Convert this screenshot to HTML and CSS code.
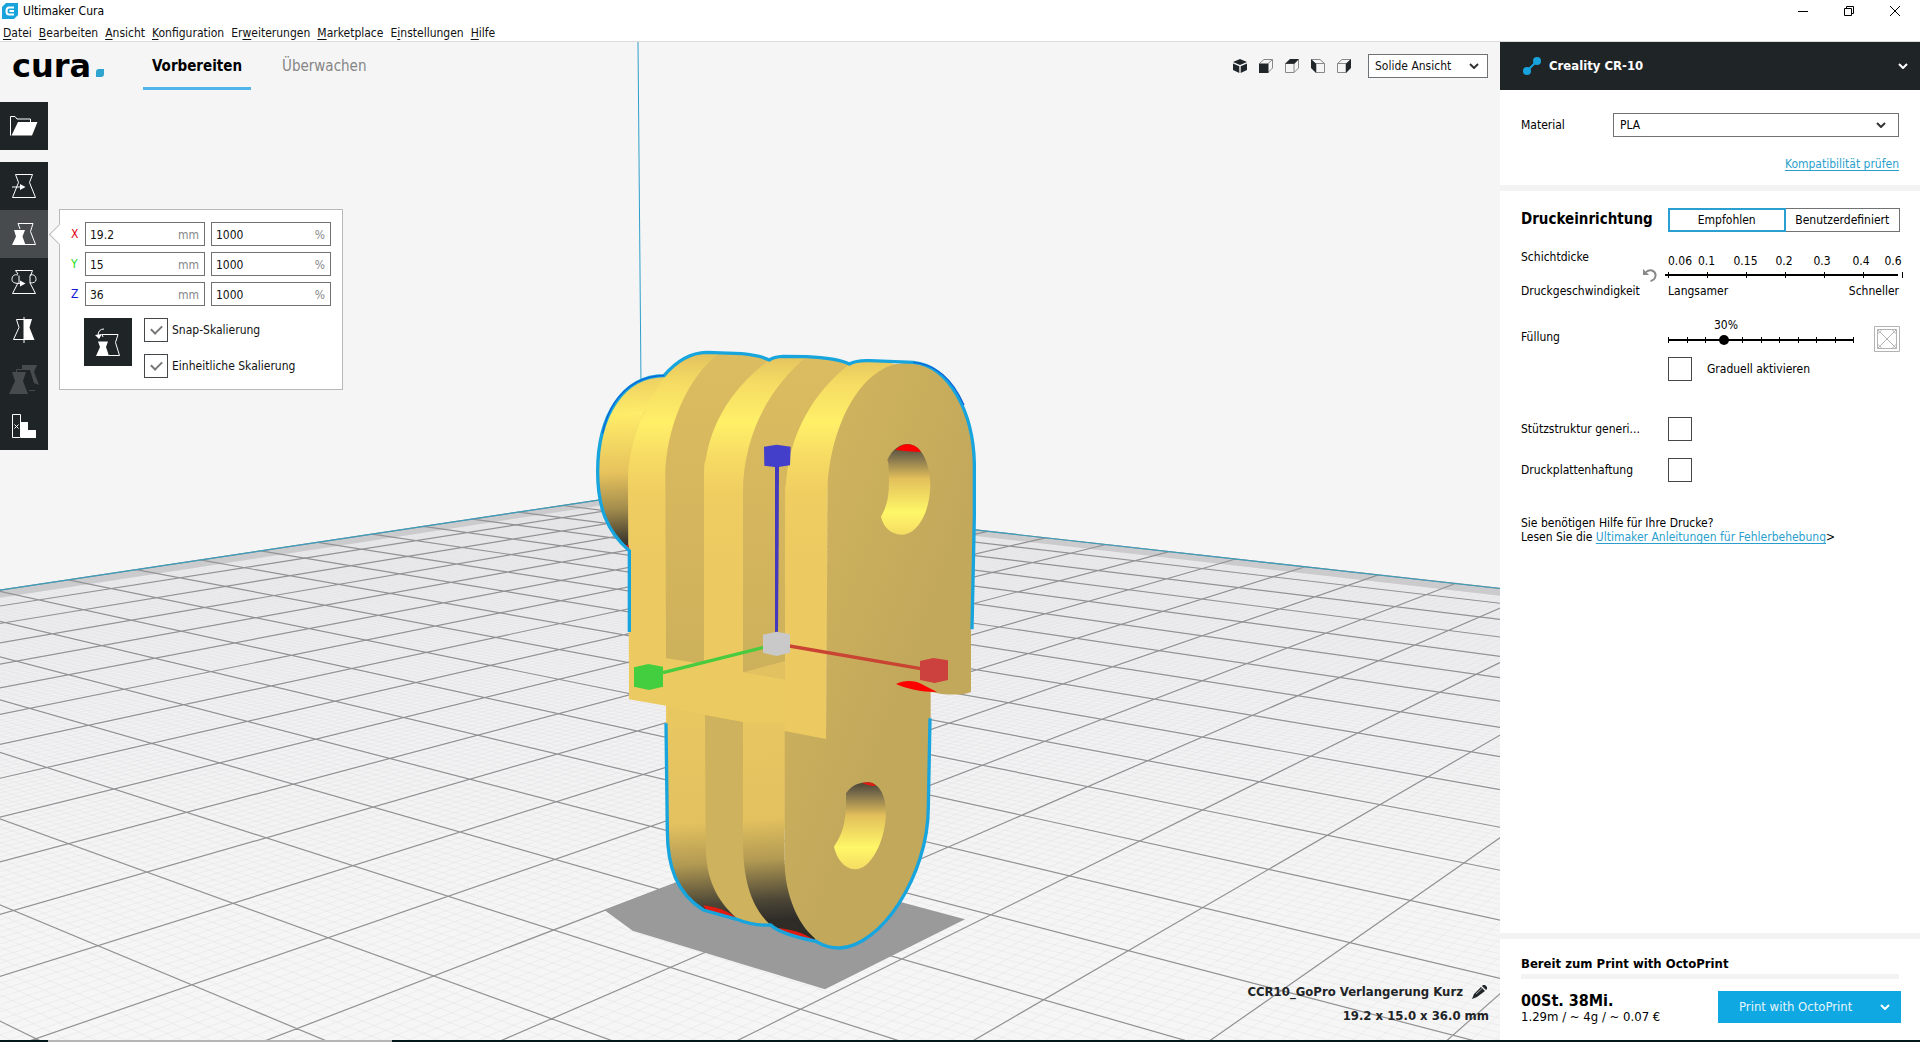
FILE: index.html
```
<!DOCTYPE html>
<html lang="de">
<head>
<meta charset="utf-8">
<title>Ultimaker Cura</title>
<link rel="stylesheet" href="styles.css">
</head>
<body>
<header class="window-bar">
  <svg class="app-icon" width="16" height="16" viewBox="0 0 16 16" aria-hidden="true"><path d="M4 0H16V12L12 16H0V4Z" fill="#18a3dc"/><path d="M12 4.500H7Q4.500 4.500 4.500 8T7 11.500H12M7.500 8H12" fill="none" stroke="#fff" stroke-width="2"/></svg>
  <span class="window-title">Ultimaker Cura</span>
  <div class="window-buttons">
    <button aria-label="Minimieren"><svg width="12" height="12" viewBox="0 0 12 12"><path d="M1 6.500H11" stroke="#000"/></svg></button>
    <button aria-label="Verkleinern"><svg width="12" height="12" viewBox="0 0 12 12"><path d="M1.500 3.500H8.500V10.500H1.500ZM3.500 3V1.500H10.500V8.500H9" fill="none" stroke="#000"/></svg></button>
    <button aria-label="Schließen"><svg width="12" height="12" viewBox="0 0 12 12"><path d="M1 1L11 11M11 1L1 11" stroke="#000"/></svg></button>
  </div>
</header>
<nav class="menu-bar">
  <a href="#"><u>D</u>atei</a><a href="#"><u>B</u>earbeiten</a><a href="#"><u>A</u>nsicht</a><a href="#"><u>K</u>onfiguration</a><a href="#">Er<u>w</u>eiterungen</a><a href="#"><u>M</u>arketplace</a><a href="#">E<u>i</u>nstellungen</a><a href="#"><u>H</u>ilfe</a>
</nav>
<div class="workspace">
  <main class="viewport">
    <svg class="scene" viewBox="0 42 1500 998" preserveAspectRatio="xMidYMid slice" aria-hidden="true">
      <defs>
        <linearGradient id="ground" gradientUnits="userSpaceOnUse" x1="0" y1="500" x2="0" y2="1040"><stop offset="0" stop-color="#ededef"/><stop offset=".3" stop-color="#f0f0f2"/><stop offset=".75" stop-color="#f5f5f5"/><stop offset="1" stop-color="#f6f6f6"/></linearGradient>
        <linearGradient id="rim" gradientUnits="userSpaceOnUse" x1="0" y1="70" x2="0" y2="700"><stop offset="0" stop-color="#e2c15e"/><stop offset=".14" stop-color="#f5db63"/><stop offset=".33" stop-color="#fff068"/><stop offset=".5" stop-color="#f6da63"/><stop offset=".68" stop-color="#efcd61"/><stop offset="1" stop-color="#ecca61"/></linearGradient>
        <linearGradient id="nut" gradientUnits="userSpaceOnUse" x1="0" y1="130" x2="30" y2="660"><stop offset="0" stop-color="#e8c860"/><stop offset=".25" stop-color="#ffec68"/><stop offset=".58" stop-color="#e6c25d"/><stop offset=".78" stop-color="#a48d4d"/><stop offset="1" stop-color="#2f2c28"/></linearGradient>
        <linearGradient id="foot" gradientUnits="userSpaceOnUse" x1="0" y1="1200" x2="40" y2="1810"><stop offset="0" stop-color="#e8c660"/><stop offset=".5" stop-color="#e3c15f"/><stop offset=".7" stop-color="#b29a53"/><stop offset=".9" stop-color="#4c4636"/><stop offset="1" stop-color="#2f2c28"/></linearGradient>
        <linearGradient id="side" gradientUnits="userSpaceOnUse" x1="700" y1="300" x2="1240" y2="500"><stop offset="0" stop-color="#d2b55e"/><stop offset="1" stop-color="#c2a85b"/></linearGradient>
        <linearGradient id="inner" gradientUnits="userSpaceOnUse" x1="0" y1="100" x2="0" y2="1050"><stop offset="0" stop-color="#dcbc60"/><stop offset="1" stop-color="#cdb05b"/></linearGradient>
        <linearGradient id="hole" x1="0" y1="0" x2="0" y2="1"><stop offset="0" stop-color="#4a4436"/><stop offset=".12" stop-color="#75694a"/><stop offset=".38" stop-color="#e2bf5b"/><stop offset=".75" stop-color="#fff768"/><stop offset="1" stop-color="#f5dc63"/></linearGradient>
      </defs>
      <g id="plate"></g>
      <path d="M638 42L641 385" stroke="#2f9fc9" fill="none"/>
      <g transform="translate(560 330) scale(.33333)">
        <path d="M133 1740L400 1640L700 1630L1215 1768L795 1978L218 1802Z" fill="#9a9a9a"/>
        <path d="M207 660V1108L318 1127V1500L674 1500L798 1227L803 470L1008 102L868 102Q800 82 740 80Q660 76 628 90Q600 74 545 70L440 66Q370 70 312 136L204 300Z" fill="#ecca62"/>
        <path d="M312 136C180 140 112 260 112 430C112 540 150 620 206 662L206 450L250 250L330 136Z" fill="url(#nut)"/>
        <path d="M204 450C204 330 270 190 330 122C370 80 400 68 440 66L500 70C400 130 316 300 316 450V1040H207Z" fill="url(#rim)"/>
        <path d="M480 68C380 140 316 300 316 440L318 985L432 1002V400L628 92Q590 72 480 68Z" fill="url(#inner)"/>
        <path d="M628 90C520 170 435 290 432 450V1040H549V470C556 300 650 150 745 82Q670 76 628 90Z" fill="url(#rim)"/>
        <path d="M740 80C640 160 552 300 549 480V1025L675 1048V470L868 102Q810 82 740 80Z" fill="url(#inner)"/>
        <path d="M549 1027L675 993V1048Z" fill="#e2c161"/>
        <path d="M868 102C760 190 684 310 677 480L675 1203L798 1227L803 470C812 300 890 130 1012 96L930 92Q890 92 868 102Z" fill="url(#rim)"/>
        <path d="M322 1130V1500C322 1610 350 1690 430 1740L530 1765L560 1600L437 1155Z" fill="url(#foot)"/>
        <path d="M430 1726C470 1732 500 1740 528 1764L440 1742Z" fill="#e21b12"/>
        <path d="M435 1155L549 1176L640 1790Q570 1786 530 1765C470 1710 437 1650 437 1540Z" fill="#cfb25d"/>
        <path d="M549 1176L674 1180V1600L768 1834Q690 1815 632 1785C580 1740 549 1660 549 1540Z" fill="url(#foot)"/>
        <path d="M645 1793C690 1797 730 1806 768 1834Q700 1820 645 1793Z" fill="#e21b12"/>
        <path d="M803 470C812 300 890 130 1008 102L1060 96C1170 110 1240 250 1243 400V560L1233 900V1085C1215 1097 1150 1096 1112 1085V1165L1105 1430C1105 1620 960 1853 840 1853C740 1853 676 1720 674 1600V1203L798 1227Z" fill="url(#side)"/>
        <path d="M982 390C1000 350 1030 340 1045 343C1085 345 1110 400 1111 465C1110 550 1070 615 1025 614C990 612 970 590 963 560C985 520 990 490 985 400Z" fill="url(#hole)"/>
        <path d="M1006 360C1022 344 1035 342 1045 343C1062 344 1074 352 1083 366Q1040 364 1006 360Z" fill="#f00"/>
        <path d="M858 1390C875 1365 900 1357 925 1357C960 1360 978 1400 978 1450C975 1540 930 1620 885 1618C850 1615 830 1585 822 1550C850 1510 860 1470 858 1390Z" fill="url(#hole)"/>
        <path d="M906 1359Q935 1352 948 1367Q930 1370 906 1359Z" fill="#e21b12"/>
        <path d="M1008 1062C1030 1050 1060 1050 1080 1060L1131 1086C1080 1086 1040 1076 1008 1062Z" fill="#f00"/>
        <path d="M195 645L206 645V660Z" fill="#e21b12"/>
        <g fill="none" stroke="#18a5de" stroke-width="10">
          <path d="M208 906V662C140 605 113 530 113 425C113 255 190 138 312 137C350 92 390 68 440 67L545 71Q600 76 628 90Q640 80 670 79L740 80Q830 84 868 102Q890 90 930 92L1060 97C1170 108 1240 250 1243 400V560L1236 898"/>
          <path d="M318 1180L322 1500C322 1610 350 1690 430 1740L530 1768Q580 1788 632 1785Q660 1812 768 1834Q800 1854 840 1854C960 1850 1105 1640 1105 1430L1110 1165"/>
        </g>
        <path d="M312 137C220 138 150 200 128 310M1060 97Q1160 106 1212 225" fill="none" stroke="#0b62d8" stroke-width="4"/>
        <path d="M645 405H657L656 630L654 910H645Z" fill="#4439bd"/>
        <path d="M612 350L650 344L692 350L690 406L650 412L613 407Z" fill="#433fcb"/>
        <path d="M309 1028L612 952" stroke="#48cb3e" stroke-width="10"/>
        <path d="M222 1012L265 1002L309 1010V1070L267 1080L222 1070Z" fill="#43ce3f"/>
        <path d="M688 948L1082 1016" stroke="#c94433" stroke-width="10"/>
        <path d="M1080 993L1120 984L1164 991V1050L1124 1059L1080 1050Z" fill="#cc403d"/>
        <path d="M609 914L650 905L690 913V968L650 978L609 968Z" fill="#c9c9c9"/>
      </g>
    </svg>
    <div class="top-bar">
      <div class="logo"><span>cura</span><svg width="8" height="8" viewBox="0 0 8 8" aria-hidden="true"><path d="M3 0H8V5Q8 8 5 8H0V3Q0 0 3 0Z" fill="#2fa4cf"/></svg></div>
      <div class="tabs"><button class="tab tab-active">Vorbereiten</button><button class="tab">Überwachen</button></div>
      <div class="camera">
        <button aria-label="3D-Ansicht"><svg viewBox="0 0 14 14"><path d="M7 0L14 3L7 6L0 3ZM0 4.500L6.300 7.200V14L0 11ZM14 4.500L7.700 7.200V14L14 11Z" fill="#1f2528"/></svg></button>
        <button aria-label="Vorderansicht"><svg viewBox="0 0 14 14"><path d="M.5 4.500L5 .5H13.500V9L9 13.500M9 4.500L13.500 .5" fill="none" stroke="#888"/><path d="M0 4.500H9.500V14H0Z" fill="#1f2528"/></svg></button>
        <button aria-label="Draufsicht"><svg viewBox="0 0 14 14"><path d="M.5 4.500H9V13.500H.5ZM9 13.500L13.500 9V.5" fill="none" stroke="#888"/><path d="M0 4.800L5 0H14L9.500 4.800Z" fill="#1f2528"/></svg></button>
        <button aria-label="Ansicht von links"><svg viewBox="0 0 14 14"><path d="M5 4.500H13.500V13.500H5ZM.5 .5H9L13.500 4.500" fill="none" stroke="#888"/><path d="M0 0L5 4.500V14L0 9Z" fill="#1f2528"/></svg></button>
        <button aria-label="Ansicht von rechts"><svg viewBox="0 0 14 14"><path d="M.5 4.500H9V13.500H.5ZM.5 4.500L5 .5H13.500" fill="none" stroke="#888"/><path d="M9 4.500L14 0V9L9 14Z" fill="#1f2528"/></svg></button>
      </div>
      <div class="select view-select"><select aria-label="Ansicht"><option>Solide Ansicht</option></select><svg class="chevron" viewBox="0 0 10 6"><path d="M1 1L5 5L9 1"/></svg></div>
    </div>
    <div class="tool-area">
      <div class="tools">
        <button class="tool tool-open" aria-label="Datei öffnen"><svg viewBox="0 0 48 48"><path d="M10.500 33.500V14.500H15L17 17H30.500V20" fill="none" stroke="#fff"/><path d="M18 20H37.500L32 33.500H11.500Z" fill="#fff"/></svg></button>
        <button class="tool" aria-label="Verschieben"><svg viewBox="0 0 48 48"><path d="M15.500 12.500H32.500L29.500 20.500L35.500 35.500H12.500L18.500 20.500ZM12 25H21" fill="none" stroke="#fff"/><path d="M20 22L25.500 25L20 28Z" fill="#fff"/></svg></button>
        <button class="tool tool-active" aria-label="Skalieren"><svg viewBox="0 0 48 48"><path d="M20 19L18 13.500H33L30.500 21.500L35.500 34.500H24" fill="none" stroke="#fff"/><path d="M14 20H25L22.500 26.500L25.500 35H12L16 26.500Z" fill="#fff"/></svg></button>
        <button class="tool" aria-label="Drehen"><svg viewBox="0 0 48 48"><path d="M18 16L15.500 12.500H32.500L30.500 18M30 25L35.500 35.500H12.500L18 25M18 17C14 16 12 18 12 21.500C12 25 16 25.500 21 25.500M19 17.500V25M30 17C34 16 36 18 36 21.500Q36 25 30 25M30 17.500V25" fill="none" stroke="#fff"/><path d="M20 22.500L25.500 25.500L20 28.500Z" fill="#fff"/></svg></button>
        <button class="tool" aria-label="Spiegeln"><svg viewBox="0 0 48 48"><path d="M24 13.500H16.500L19 21.500L13.500 33.500H24M24 11V37" fill="none" stroke="#fff"/><path d="M24 13H32L29.500 21.500L34.500 34H24Z" fill="#fff"/></svg></button>
        <button class="tool" aria-label="Einstellungen pro Objekt" disabled><svg viewBox="0 0 48 48"><path d="M12 18H26L23 27L28 40H9L15 27ZM22 11H37L34 18L39 31L34 29L30 16H22Z" fill="#474b4d"/><path d="M16.500 18V15.500H30M29 36.500H35" fill="none" stroke="#474b4d"/></svg></button>
        <button class="tool" aria-label="Stützstruktur-Blocker"><svg viewBox="0 0 48 48"><path d="M12.500 12.500H20.500V35.500H12.500ZM14.500 22.500L18.500 26.500M18.500 22.500L14.500 26.500" fill="none" stroke="#fff"/><path d="M21 20H28V28H36V36H21Z" fill="#fff"/></svg></button>
      </div>
      <form class="scale-panel">
        <div class="axis-row"><label class="axis-x" for="sx">X</label><span class="field"><input id="sx" value="19.2"><span>mm</span></span><span class="field"><input aria-label="X Prozent" value="1000"><span>%</span></span></div>
        <div class="axis-row"><label class="axis-y" for="sy">Y</label><span class="field"><input id="sy" value="15"><span>mm</span></span><span class="field"><input aria-label="Y Prozent" value="1000"><span>%</span></span></div>
        <div class="axis-row"><label class="axis-z" for="sz">Z</label><span class="field"><input id="sz" value="36"><span>mm</span></span><span class="field"><input aria-label="Z Prozent" value="1000"><span>%</span></span></div>
        <div class="scale-options">
          <button type="button" class="reset-scale" aria-label="Zurücksetzen"><svg viewBox="0 0 48 48"><path d="M19 19L18 16.500H34L31.500 24.500L35.500 37.500H25M20 11Q14 11 14 18" fill="none" stroke="#fff"/><path d="M14 23.500H24L22 29L25 38H12L16 29ZM11 17L18 16L15 21Z" fill="#fff"/></svg></button>
          <div class="checks">
            <label><input type="checkbox" class="box" checked>Snap-Skalierung</label>
            <label><input type="checkbox" class="box" checked>Einheitliche Skalierung</label>
          </div>
        </div>
      </form>
    </div>
    <div class="job-info">
      <div class="job-name"><span>CCR10_GoPro Verlangerung Kurz</span><svg width="16" height="14" viewBox="0 0 16 14" aria-hidden="true"><path d="M0 14L2 9L9 2L13 6L5 12ZM10 1L11 0H13L15 2V4L14 5Z" fill="#1f2528"/><path d="M4 9L10 3.500" stroke="#fff" stroke-width=".6"/></svg></div>
      <div>19.2 x 15.0 x 36.0 mm</div>
    </div>
  </main>
  <aside class="sidebar">
    <button class="machine"><svg width="20" height="20" viewBox="0 0 20 20" aria-hidden="true"><path d="M5 15L15 5" stroke="#18a3dc" stroke-width="2"/><circle cx="5" cy="15" r="4" fill="#18a3dc"/><circle cx="15" cy="5" r="4" fill="#18a3dc"/></svg><span>Creality CR-10</span><svg class="chevron" viewBox="0 0 10 6"><path d="M1 1L5 5L9 1"/></svg></button>
    <section class="material">
      <div class="material-row"><label for="mat">Material</label><div class="select"><select id="mat"><option>PLA</option></select><svg class="chevron" viewBox="0 0 10 6"><path d="M1 1L5 5L9 1"/></svg></div></div>
      <a href="#" class="link">Kompatibilität prüfen</a>
    </section>
    <section class="setup">
      <div class="setup-head"><h2>Druckeinrichtung</h2><div class="modes"><button class="mode mode-active">Empfohlen</button><button class="mode">Benutzerdefiniert</button></div></div>
      <div class="layer-grid">
        <div class="layer-labels"><label for="layer">Schichtdicke</label><span>Druckgeschwindigkeit</span></div>
        <button class="undo" aria-label="Zurücksetzen"><svg width="14" height="14" viewBox="0 0 14 14"><path d="M3 4Q6 1.500 9 2.500Q13 4 12.500 8Q12 12 7.500 13" fill="none" stroke="#888" stroke-width="2"/><path d="M0 1V7H6Z" fill="#888"/></svg></button>
        <div class="layer-control">
          <div class="layer-values"><span>0.06</span><span>0.1</span><span>0.15</span><span>0.2</span><span>0.3</span><span>0.4</span><span>0.6</span></div>
          <div class="slider layer-slider"><svg viewBox="0 0 240 8" aria-hidden="true"><path d="M0 4H233" stroke="#000" stroke-width="2"/><path d="M3.500 1V7M42.500 1V7M81.500 1V7M120.500 1V7M159.500 1V7M198.500 1V7M237.500 1V7" stroke="#000"/></svg><input id="layer" type="range" class="no-thumb"></div>
          <div class="speed"><span>Langsamer</span><span>Schneller</span></div>
        </div>
      </div>
      <div class="infill">
        <label for="infill">Füllung</label>
        <div class="infill-control">
          <output for="infill">30%</output>
          <div class="slider infill-slider"><svg viewBox="0 0 186 8" aria-hidden="true"><path d="M0 4H186" stroke="#000" stroke-width="2"/><path d="M.5 1V7M19.500 1V7M37.500 1V7M56.500 1V7M74.500 1V7M93.500 1V7M111.500 1V7M130.500 1V7M148.500 1V7M167.500 1V7M185.500 1V7" stroke="#000"/></svg><input id="infill" type="range" min="0" max="100" value="30"></div>
        </div>
        <svg class="infill-icon" width="26" height="26" viewBox="0 0 26 26" aria-hidden="true"><path d="M.5 .5H25.500V25.500H.5ZM3.500 3.500H22.500V22.500H3.500ZM3.500 3.500L22.500 22.500M22.500 3.500L3.500 22.500M3.500 8L8 3.500M18 3.500L22.500 8M3.500 18L8 22.500M18 22.500L22.500 18" fill="none" stroke="#b3b3b3"/></svg>
      </div>
      <label class="gradual"><input type="checkbox" class="box">Graduell aktivieren</label>
      <div class="option option-support"><label for="sup">Stützstruktur generi...</label><input id="sup" type="checkbox" class="box"></div>
      <div class="option"><label for="adh">Druckplattenhaftung</label><input id="adh" type="checkbox" class="box"></div>
      <p class="help">Sie benötigen Hilfe für Ihre Drucke?<br>Lesen Sie die <a href="#" class="link">Ultimaker Anleitungen für Fehlerbehebung</a>&gt;</p>
    </section>
    <section class="print">
      <div class="status">Bereit zum Print with OctoPrint</div>
      <div class="progress"></div>
      <div class="print-row">
        <div><div class="time">00St. 38Mi.</div><div class="usage">1.29m / ~ 4g / ~ 0.07 €</div></div>
        <button class="print-button"><span>Print with OctoPrint</span><svg class="chevron" viewBox="0 0 10 6"><path d="M1 1L5 5L9 1"/></svg></button>
      </div>
    </section>
  </aside>
</div>
<footer class="taskbar"><span></span></footer>
<script src="plate.js"></script>
</body>
</html>
```
FILE: styles.css
```
* { box-sizing: border-box; }
body { margin: 0; height: 100vh; display: flex; flex-direction: column; overflow: hidden; background: #fff; color: #111; font: 12px/14px "DejaVu Sans Condensed", "DejaVu Sans", sans-serif; }
button, input, select { font: inherit; color: inherit; margin: 0; padding: 0; border: 0; background: none; border-radius: 0; }
button { display: flex; align-items: center; }
svg { display: block; flex: none; }
.window-bar { display: flex; align-items: center; height: 22px; padding-left: 2px; gap: 5px; color: #000; }
.window-buttons { display: flex; margin-left: auto; gap: 34px; padding-right: 19px; }
.menu-bar { display: flex; gap: 7px; height: 20px; padding: 4px 3px 0; border-bottom: 1px solid #dcdcdc; }
.menu-bar a { color: #111; text-decoration: none; }
.menu-bar u { text-underline-offset: 2px; }
.workspace { flex: 1; display: flex; min-height: 0; }
.viewport { position: relative; flex: 1; min-width: 0; display: flex; flex-direction: column; background: #f5f5f5; overflow: hidden; }
.scene { position: absolute; inset: 0; width: 100%; height: 100%; }
.top-bar, .tool-area, .job-info { position: relative; }
.top-bar { display: flex; align-items: center; height: 48px; padding: 0 12px; }
.logo { display: flex; align-items: flex-end; gap: 5px; width: 131px; color: #000; }
.logo span { font: bold 32px/36px "DejaVu Sans", sans-serif; }
.logo svg { margin-bottom: 7px; }
.tabs { display: flex; gap: 22px; height: 48px; }
.tab { height: 48px; padding: 3px 9px 0; font-size: 15px; color: #858585; border-bottom: 3px solid transparent; }
.tab-active { font-weight: bold; color: #000; border-color: #4fb5ea; }
.camera { display: flex; gap: 12px; margin-left: auto; margin-right: 17px; }
.camera svg { width: 14px; height: 14px; }
.select { display: flex; align-items: center; position: relative; height: 24px; border: 1px solid #6f7375; background: #fff; }
.select select { appearance: none; width: 100%; height: 22px; padding-left: 6px; }
.chevron { width: 10px; height: 6px; fill: none; stroke: #333; stroke-width: 2; }
.select .chevron { position: absolute; right: 8px; pointer-events: none; }
.view-select { width: 120px; }
.tool-area { display: flex; align-items: flex-start; padding-top: 12px; gap: 11px; }
.tools { width: 48px; }
.tool { width: 48px; height: 48px; background: #1f2426; }
.tool svg, .reset-scale svg { width: 48px; height: 48px; }
.tool-open { margin-bottom: 12px; }
.tool-active { background: #474b4d; }
.scale-panel { position: relative; width: 284px; margin-top: 107px; padding: 12px 11px 11px; background: #fff; border: 1px solid #b9b9b9; }
.scale-panel::before { content: ""; position: absolute; left: -8px; top: 17px; width: 14px; height: 14px; background: #fff; border: solid #b9b9b9; border-width: 0 0 1px 1px; transform: rotate(45deg); }
.axis-row { display: flex; align-items: center; gap: 6px; margin-bottom: 6px; }
.axis-row label { width: 8px; }
.axis-x { color: #e00012; }
.axis-y { color: #18e018; }
.axis-z { color: #1616d8; }
.field { display: flex; align-items: center; width: 120px; height: 24px; padding: 1px 5px 0 4px; border: 1px solid #6f7375; background: #fff; }
.field input { flex: 1; min-width: 0; height: 20px; }
.field span { color: #85878a; }
.scale-options { display: flex; gap: 12px; margin-top: 12px; padding-left: 13px; }
.reset-scale { width: 48px; height: 48px; background: #1f2426; }
.checks { display: flex; flex-direction: column; gap: 12px; }
.checks label { display: flex; align-items: center; gap: 4px; }
.box { appearance: none; display: grid; place-content: center; width: 24px; height: 24px; border: 1px solid #43474a; background: #fff; }
.box:checked::before { content: ""; width: 9px; height: 5px; margin-bottom: 3px; border: solid #777; border-width: 0 0 2px 2px; transform: rotate(-45deg); }
.job-info { margin-top: auto; padding: 0 11px 17px; display: flex; flex-direction: column; align-items: flex-end; gap: 10px; font-size: 13px; font-weight: bold; color: #1f2426; }
.job-name { display: flex; align-items: center; gap: 9px; padding-right: 1px; }
.sidebar { width: 420px; display: flex; flex-direction: column; background: #fff; color: #000; }
.machine { height: 48px; padding: 0 12px 0 22px; gap: 7px; background: #1f2426; color: #fff; font-size: 13px; font-weight: bold; }
.machine .chevron { margin-left: auto; stroke: #fff; }
.material { height: 101px; padding: 23px 21px 0; border-bottom: 6px solid #f3f3f3; display: flex; flex-direction: column; gap: 20px; align-items: flex-end; }
.material-row { display: flex; align-items: center; width: 100%; }
.material-row label { width: 92px; }
.material-row .select { flex: 1; }
.material-row .chevron { right: 12px; }
.link { color: #2a9fce; text-underline-offset: 2px; }
.setup { flex: 1; padding: 17px 20px 0 21px; }
.setup-head { display: flex; align-items: center; }
h2 { width: 147px; margin: 0; font-size: 15px; line-height: 20px; padding-bottom: 2px; }
.modes { display: flex; flex: 1; }
.mode { flex: 1; justify-content: center; height: 24px; border: 1px solid #6f7375; border-left: 0; }
.mode-active { border: 2px solid #2a9fd2; }
.layer-grid { display: flex; margin-top: 17px; }
.layer-labels { display: flex; flex-direction: column; flex: none; gap: 20px; width: 122px; padding-top: 1px; }
.undo { flex: none; width: 22px; align-self: flex-start; margin-top: 19px; }
.layer-control { flex: 1; min-width: 0; }
.layer-values { display: flex; padding: 5px 0 2px 3px; }
.layer-values span { flex: none; width: 39px; text-align: center; }
.layer-values span:first-child { width: 24px; }
.layer-values span:nth-child(2) { width: 29px; }
.layer-values span:nth-child(3) { width: 49px; }
.layer-values span:nth-child(4) { width: 28px; }
.layer-values span:nth-child(5) { width: 48px; }
.layer-values span:nth-child(6) { width: 30px; }
.layer-values span:last-child { width: 34px; }
.slider { display: grid; align-items: center; height: 10px; }
.slider > * { grid-area: 1 / 1; }
.slider input { appearance: none; height: 10px; }
.slider input::-webkit-slider-thumb { appearance: none; width: 10px; height: 10px; border-radius: 5px; background: #000; }
.slider .no-thumb::-webkit-slider-thumb { opacity: 0; }
.layer-slider svg { width: 240px; height: 8px; }
.layer-slider input { width: 233px; }
.speed { display: flex; justify-content: space-between; padding: 4px 1px 0 3px; }
.infill { display: flex; align-items: flex-start; margin-top: 20px; }
.infill > label { width: 147px; padding-top: 12px; }
.infill-control { width: 186px; }
output { display: block; width: 26px; margin: 0 0 3px 46px; }
.infill-slider svg { width: 186px; height: 8px; }
.infill-slider input { width: 196px; margin: 0 -5px; }
.infill-icon { margin: 8px 0 0 20px; }
.gradual { display: flex; align-items: center; gap: 15px; margin: 5px 0 0 147px; }
.option { display: flex; align-items: center; margin-top: 17px; }
.option-support { margin-top: 36px; }
.option label { width: 147px; }
.help { margin: 34px 0 0; }
.print { height: 107px; padding: 17px 19px 0 21px; border-top: 6px solid #f3f3f3; }
.status { font-size: 13px; font-weight: bold; line-height: 16px; }
.progress { height: 5px; margin: 2px 2px 12px 0; background: #f3f3f3; }
.print-row { display: flex; justify-content: space-between; }
.time { font-size: 16px; font-weight: bold; line-height: 19px; }
.usage { font-size: 13px; }
.print-button { width: 183px; height: 32px; padding: 0 11px 0 21px; justify-content: space-between; background: #0fa8e2; color: #e6f6fc; font-size: 13px; }
.print-button .chevron { stroke: #fff; }
.taskbar { height: 2px; background: #03171c; padding-left: 48px; }
.taskbar span { display: block; width: 344px; height: 2px; background: #b4b6b6; }
```
FILE: plate.js
```
// Perspective of the build plate: plate coordinates in cm -> scene coordinates.
const H = [191.86, 158.2701, 88.45175, 984.8159, 15.74686, -13.64545, 0.06700208, -0.05582405];
const depth = ([u, v]) => 1 + H[6] * u + H[7] * v;
const project = ([u, v]) => {
  const w = depth([u, v]);
  return [(H[0] + H[1] * u + H[2] * v) / w, (H[3] + H[4] * u + H[5] * v) / w].map(n => n.toFixed(1)).join(" ");
};

// Cut every line off in front of the camera plane.
const NEAR = 0.25;
const clip = (p, q) => {
  const t = (NEAR - depth(p)) / (depth(q) - depth(p));
  return [p[0] + (q[0] - p[0]) * t, p[1] + (q[1] - p[1]) * t];
};
const segment = (a, b) => {
  if (depth(a) < NEAR && depth(b) < NEAR) return "";
  if (depth(a) < NEAR) a = clip(a, b);
  if (depth(b) < NEAR) b = clip(b, a);
  return "M" + project(a) + "L" + project(b);
};

const U = [-12, 18], V = [-13, 17];
const grid = step => {
  let d = "";
  for (let i = 0; i <= Math.round(30 / step); i++) {
    const u = U[0] + i * step, v = V[0] + i * step;
    d += segment([u, V[0]], [u, V[1]]) + segment([U[0], v], [U[1], v]);
  }
  return d;
};
const polygon = points => "M" + points.map(project).join("L") + "Z";
const path = (d, attrs) => `<path d="${d}" ${attrs}/>`;

document.getElementById("plate").innerHTML =
  path(polygon([[18, -13], [-1, -13], [-6, -1], [3, 9], [18, 5]]), 'fill="url(#ground)"') +
  path(grid(0.1), 'fill="none" stroke="#dcdcdf" stroke-width=".35"') +
  path(polygon([[18, -13], [0, -13], [0, -12.5], [17.5, -12.5], [17.5, 5], [18, 5]]), 'fill="#cbcbce"') +
  path(grid(1), 'fill="none" stroke="#929294" stroke-width="1.2"') +
  path(segment([18, -13], [0, -13]) + segment([18, -13], [18, 5]), 'fill="none" stroke="#3c9dbb" stroke-width="1.2"');
```
